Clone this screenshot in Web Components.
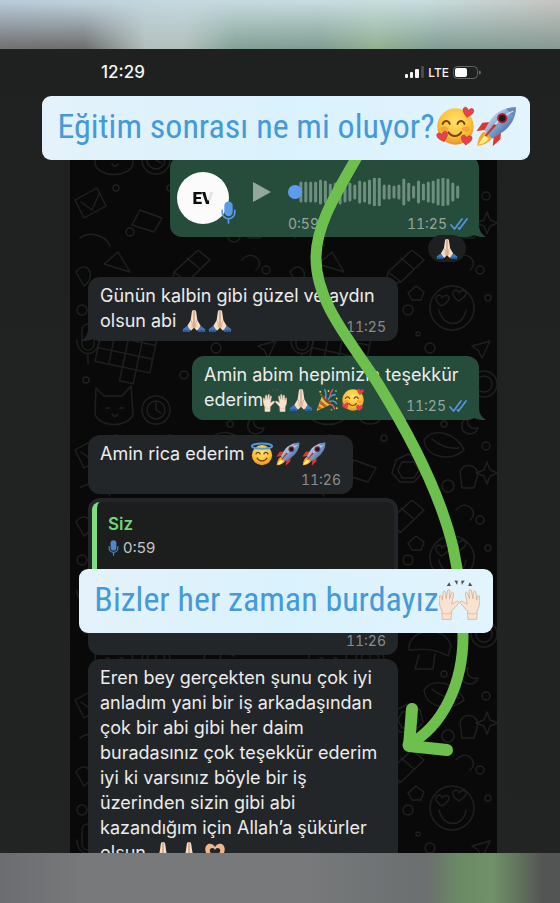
<!DOCTYPE html>
<html lang="tr">
<head>
<meta charset="utf-8">
<meta name="viewport" content="width=device-width, initial-scale=1">
<title>Eğitim sonrası</title>
<style>
  body {
    margin: 0;
    background: #202221;
    font-family: Inter, "Liberation Sans", sans-serif;
  }
</style>
</head>
<body>
<story-page>
  <phone-status slot="phone" time="12:29" network="LTE"></phone-status>
  <chat-wall slot="phone">
    <voice-message length="0:59" time="11:25"></voice-message>
    <chat-reaction><emoji-icon name="pray"></emoji-icon></chat-reaction>
    <chat-bubble class="wide" time="11:25" tail>Günün kalbin gibi güzel ve aydın<br>olsun abi <emoji-icon name="pray"></emoji-icon><emoji-icon name="pray"></emoji-icon></chat-bubble>
    <chat-bubble side="out" time="11:25" tail>Amin abim hepimizin teşekkür<br>ederim<emoji-icon name="hands"></emoji-icon><emoji-icon name="pray"></emoji-icon><emoji-icon name="party"></emoji-icon><emoji-icon name="love"></emoji-icon></chat-bubble>
    <chat-bubble class="short" time="11:26" stacked>Amin rica ederim <emoji-icon name="halo"></emoji-icon><emoji-icon name="rocket"></emoji-icon><emoji-icon name="rocket"></emoji-icon></chat-bubble>
    <chat-quote class="wide" author="Siz" length="0:59" time="11:26"></chat-quote>
    <chat-bubble class="wide">Eren bey gerçekten şunu çok iyi<br>anladım yani bir iş arkadaşından<br>çok bir abi gibi her daim<br>buradasınız çok teşekkür ederim<br>iyi ki varsınız böyle bir iş<br>üzerinden sizin gibi abi<br>kazandığım için Allah’a şükürler<br>olsun <emoji-icon name="pray"></emoji-icon><emoji-icon name="pray"></emoji-icon><emoji-icon name="heart"></emoji-icon></chat-bubble>
  </chat-wall>
  <story-caption slot="caption">Eğitim sonrası ne mi oluyor?<emoji-icon name="love"></emoji-icon><emoji-icon name="rocket"></emoji-icon></story-caption>
  <story-caption slot="caption">Bizler her zaman burdayız<emoji-icon name="hands"></emoji-icon></story-caption>
</story-page>

<script>
const MIC = `
  <svg class="mic" viewBox="0 0 14 22" aria-hidden="true">
    <rect x="3" y="0.5" width="8" height="14" rx="4" fill="currentColor"/>
    <path d="M1 9v2a6 6 0 0 0 12 0V9M7 17v4" fill="none" stroke="currentColor" stroke-width="1.6" stroke-linecap="round"/>
  </svg>`;

const TICKS = `
  <svg class="ticks" viewBox="0 0 18 12" aria-hidden="true">
    <path d="M1 7l3.5 4L12 1M8.500 10l1 1L17 1" fill="none" stroke="#4f94dc" stroke-width="1.8" stroke-linecap="round" stroke-linejoin="round"/>
  </svg>`;

const FACE = `
  <radialGradient id="face" cx=".5" cy=".35" r=".65">
    <stop offset="0" stop-color="#ffe46a"/><stop offset=".65" stop-color="#fbc137"/><stop offset="1" stop-color="#e9922a"/>
  </radialGradient>`;

const HEART = 'M0 2.200C-1-1-4.500-.6-4.200 2.200C-4 4.600-1.500 6 0 7.600C1.500 6 4 4.600 4.200 2.200C4.500-.6 1-1 0 2.200Z';

const EMOJI = {
  pray: `
    <path d="M1 27l5-4 6 3-2 4.500H1.500zM31 27l-5-4-6 3 2 4.500h8.500z" fill="#3f78bf"/>
    <path d="M1.500 30.500l1-3 8 1-1 2zM30.500 30.500l-1-3-8 1 1 2z" fill="#2b5a9c"/>
    <path d="M15.800 1.500c-1.800-.4-2.600 1-2.800 3L11.500 15 7 22.500l5 6.500 3.800-4zM16.200 1.500c1.800-.4 2.600 1 2.800 3L20.500 15l4.500 7.500-5 6.500-3.800-4z" fill="#f8dcc4"/>
    <path d="M16 2v24M12 15.500c2 2 2 6 1.500 9M20 15.500c-2 2-2 6-1.500 9" fill="none" stroke="#c79678" stroke-width=".9"/>`,
  love: `
    <defs>${FACE}</defs>
    <circle cx="16" cy="16" r="14.200" fill="url(#face)"/>
    <path d="M6 14c1-3 4.500-3 5.500 0M17.500 14c1-3 4.500-3 5.500 0M10.500 20.500c2 3.800 8 3.800 10 0" fill="none" stroke="#7a3f16" stroke-width="1.500" stroke-linecap="round"/>
    <ellipse cx="7.500" cy="18" rx="3" ry="2" fill="#f2813c" opacity=".5"/><ellipse cx="24" cy="18" rx="3" ry="2" fill="#f2813c" opacity=".5"/>
    <g fill="#e8414a" stroke="#b92d3a" stroke-width=".4">
      <path transform="translate(26.500 1.500) rotate(12)" d="${HEART}"/>
      <path transform="translate(5 20.500) rotate(-16)" d="${HEART}"/>
      <path transform="translate(25 23) rotate(8)" d="${HEART}"/>
    </g>`,
  halo: `
    <defs>${FACE}</defs>
    <circle cx="16" cy="17.500" r="13.500" fill="url(#face)"/>
    <ellipse cx="16" cy="5.500" rx="13.500" ry="3.500" fill="none" stroke="#4a9be6" stroke-width="2.600"/>
    <path d="M8 16c1-3 4.500-3 5.500 0M18.500 16c1-3 4.500-3 5.500 0M9.500 21.500c3 5 10 5 13 0" fill="none" stroke="#7a3f16" stroke-width="1.700" stroke-linecap="round"/>`,
  rocket: `
    <defs><linearGradient id="hull" x1="0" y1="0" x2="1" y2="1">
      <stop offset=".1" stop-color="#dfe9f3"/><stop offset=".5" stop-color="#7fa3cf"/><stop offset=".9" stop-color="#2f5188"/>
    </linearGradient></defs>
    <path d="M11.500 12.500l-6.500.5-4.500 6.500 8-1zM19.500 20.500l-.5 5.500-6 5.500 1-8.500z" fill="#d8392f"/>
    <path d="M6 20c-3 2-4.500 6-5 11 5-.5 9-2.500 11-5.500l-2-4z" fill="#f6a623"/>
    <path d="M7 23c-2 1.500-3.500 4-5 7 4-.5 6-2 8-4.500z" fill="#fff08a"/>
    <path d="M31 1c-8 0-15 3.500-19.500 9.500L6.500 19l6 6.500 8-5C27 16 31.500 9 31 1z" fill="url(#hull)"/>
    <path d="M31 1c-3 0-5.500.4-7.500 1.200l6 6C30.600 6 31 3.500 31 1z" fill="#6789b7"/>
    <path d="M29 4C20 8 14 14 9.500 21.500" fill="none" stroke="#f4f7fb" stroke-width="1.200" opacity=".7"/>
    <circle cx="20.500" cy="9.500" r="4" fill="#a92832"/><circle cx="20.500" cy="9.500" r="2.500" fill="#24161f"/>
    <path d="M16 15L8 24l-1-1 7-9z" fill="#c8342f"/>`,
  hands: `
    <g id="h">
      <path d="M2.500 31.500l-.2-6.500C.4 21.500-.2 18 .3 14c.2-1.500 1.500-1.400 1.700 0l.6 2.500.6-6c.2-1.600 1.900-1.600 2 0l.3 5 1.200-6.200c.3-1.500 1.900-1.300 1.900.2L8.200 15.500l1.500-4.300c.5-1.400 1.900-1 1.700.5l-1.400 8 3.600-2.200c1.500-.8 2.400.6 1.500 1.700L9.800 25l-.4 6.500z" fill="#f8e2d0" stroke="#d3ad94" stroke-width=".6"/>
      <path d="M2.800 26.500c2 1 4.500 1 6.600 0" fill="none" stroke="#d9b59d" stroke-width=".6"/>
    </g>
    <use href="#h" transform="matrix(-1 0 0 1 32 0)"/>
    <path d="M6 5.500l2-3 1.200 3zM12 1.200l2.700.2-.6 3.200zM20 1.200l-2.700.2.600 3.200zM26 5.500l-2-3-1.200 3z" fill="#4b5257"/>`,
  party: `
    <path d="M2 30.500L9.500 10l12 11.500z" fill="#f1b834"/>
    <path d="M7.200 16.500l9 7.500-3.500 1.700-7-5zM4.500 23.500l5 3.500-3.700 1.600-2.300-1.500z" fill="#b6622c"/>
    <ellipse cx="15.500" cy="15.800" rx="2.800" ry="8.300" transform="rotate(-46 15.500 15.800)" fill="#7d4a2a"/>
    <path d="M14 14c1-5 1-8-1-12M18 15c2-5 5-6 9-6M19 18c4-2 8 0 10 3" fill="none" stroke="#4b9fe0" stroke-width="1.800" stroke-linecap="round"/>
    <path d="M20 11c0-4 1-6 4-9M20 22c3 0 5 2 6 6" fill="none" stroke="#e25564" stroke-width="1.800" stroke-linecap="round"/>
    <g fill="#f4cb3f"><circle cx="7" cy="5" r="1.300"/><circle cx="29" cy="14" r="1.300"/><circle cx="18" cy="4" r="1.200"/><circle cx="29" cy="27" r="1.300"/></g>
    <g fill="#68b85b"><circle cx="28" cy="4" r="1.300"/><circle cx="22" cy="29" r="1.300"/><circle cx="8" cy="9" r="1"/></g>`,
  heart: `
    <path d="M16 8C12 1 3 3 3 11c0 6 4 9 6 12l-1 8h5l2-6 1 1 1-1 2 6h5l-1-8c2-3 6-6 6-12C29 3 20 1 16 8z" fill="#edb68c"/>
    <path d="M16 12c-2-4-7-3-7 1 0 3 4 5 7 9 3-4 7-6 7-9 0-4-5-5-7-1z" fill="#232628"/>`
};

class EmojiIcon extends HTMLElement {
  connectedCallback() {
    const shadow = this.attachShadow({ mode: 'open' });
    shadow.innerHTML = `
      <style>
        :host { display: inline-block; width: var(--emoji, 24px); height: var(--emoji, 24px); margin-right: var(--emoji-gap, 2px); vertical-align: middle; }
        svg { display: block; width: 100%; height: 100%; }
      </style>
      <svg viewBox="0 0 32 32" aria-hidden="true">${EMOJI[this.getAttribute('name')]}</svg>`;
  }
}

class StoryPage extends HTMLElement {
  connectedCallback() {
    const shadow = this.attachShadow({ mode: 'open' });
    shadow.innerHTML = `
      <style>
        :host { display: flex; flex-direction: column; height: 100vh; overflow: hidden; }
        .band { position: relative; flex: none; height: 49px; }
        .top { background: linear-gradient(90deg, #b7c9d7, #c4d8df 30%, #c6dcdd 75%, #c4c4c0); }
        .top::after {
          content: ""; position: absolute; inset: 0;
          background: linear-gradient(90deg, #6f6f70, #6c6c6c 15%, #b2beba 26%, #b2beba 33%, #83a096 42%, #7f9b91 57%, #91af8f 67%, #809c92 78%, #879892);
          -webkit-mask-image: linear-gradient(transparent 5%, #000);
          mask-image: linear-gradient(transparent 5%, #000);
        }
        .bottom {
          height: 50px;
          background: linear-gradient(90deg, #6b6d70, #78797b 15%, #77797b 55%, #6b6f70 76%, #6b8a65 82%, #6f9168 88%, #60705c 93%, #525553 97%);
        }
        .story { position: relative; flex: 1; min-height: 0; overflow: hidden; background: linear-gradient(#1f2020, #222423); }
        .phone { display: flex; flex-direction: column; height: 100%; padding: 0 63px 0 70px; box-sizing: border-box; }
        .arrow { position: absolute; top: 0; left: 0; width: 100%; }
        .captions {
          position: absolute; inset: 0; padding: 47px 0 0 12px;
          display: flex; flex-direction: column; align-items: center; gap: 409px;
        }
      </style>
      <div class="band top"></div>
      <main class="story">
        <div class="phone"><slot name="phone"></slot></div>
        <svg class="arrow" viewBox="0 49 560 804" fill="none" stroke="#6dbf4e" stroke-width="11" stroke-linecap="round" stroke-linejoin="round" aria-hidden="true">
          <path d="M366 140C346 180 316 218 316 258C316 304 353 344 377 382C413 440 441 497 453 547C460 580 463 610 463 636C463 682 444 726 408 745"/>
          <path d="M412 709L409 746L447 750" stroke-width="12"/>
        </svg>
        <div class="captions"><slot name="caption"></slot></div>
      </main>
      <div class="band bottom"></div>`;
  }
}

class StoryCaption extends HTMLElement {
  connectedCallback() {
    const shadow = this.attachShadow({ mode: 'open' });
    shadow.innerHTML = `
      <style>
        :host {
          --emoji: 41px; --emoji-gap: 0px;
          display: block; padding: 0 13px 4px 15px; border-radius: 9px;
          background: linear-gradient(90deg, #e4f2fb, #daf2fd 50%, #e2f4fd);
          color: #4699da;
          font: 34px/60px "Liberation Sans Narrow", "Roboto Condensed", "Open Sans Condensed", "Liberation Sans", sans-serif;
          white-space: nowrap;
        }
        ::slotted(emoji-icon) { margin-top: -6px; }
      </style>
      <slot></slot>`;
  }
}

class PhoneStatus extends HTMLElement {
  connectedCallback() {
    const shadow = this.attachShadow({ mode: 'open' });
    shadow.innerHTML = `
      <style>
        :host { display: flex; align-items: center; gap: 4px; flex: none; height: 46px; padding: 0 16px 60px 31px; color: #f4f4f4; }
        .time { margin-right: auto; font-size: 17px; font-weight: 500; }
        .net { font-size: 12px; font-weight: 500; }
      </style>
      <span class="time">${this.getAttribute('time')}</span>
      <svg width="19" height="12" aria-hidden="true">
        <g fill="#f4f4f4"><rect y="8" width="3" height="4" rx="1"/><rect x="5" y="6" width="3" height="6" rx="1"/><rect x="10" y="3" width="4" height="9" rx="1"/></g>
        <rect x="16" width="3" height="12" rx="1" fill="#4a4a4a"/>
      </svg>
      <span class="net">${this.getAttribute('network')}</span>
      <svg width="28" height="13" aria-hidden="true">
        <rect x=".5" y=".5" width="24" height="12" rx="4" fill="none" stroke="#666"/>
        <rect x="2" y="2" width="12" height="9" rx="2" fill="#fff"/>
        <path d="M26 4.500a2 2 0 0 1 0 4z" fill="#666"/>
      </svg>`;
  }
}

class ChatWall extends HTMLElement {
  connectedCallback() {
    const shadow = this.attachShadow({ mode: 'open' });
    shadow.innerHTML = `
      <style>
        :host { position: relative; display: block; flex: 1; min-height: 0; overflow: hidden; background: #090909; }
        svg { position: absolute; inset: 0; width: 100%; height: 100%; }
        .list { position: relative; display: flex; flex-direction: column; align-items: flex-start; gap: 15px; padding: 1px 18px 0; }
        ::slotted([side="out"]), ::slotted(voice-message), ::slotted(chat-reaction) { align-self: flex-end; }
        ::slotted(chat-quote) { margin-top: -11px; margin-bottom: -11px; }
        ::slotted(.wide) { width: 310px; }
        ::slotted(.short) { width: 265px; }
      </style>
      <svg aria-hidden="true">
        <defs><pattern id="doodles" width="214" height="250" patternUnits="userSpaceOnUse" x="0" y="95">
          <g fill="none" stroke="#1e1f1f" stroke-width="1.400" stroke-linejoin="round" stroke-linecap="round">
            <circle cx="168" cy="58" r="22"/><path d="M155 60c4 18 24 18 27 0M158 56c-7-4-8-10-3-11 2 0 3 2 3 3 2-4 8-3 7 1-1 3-4 5-7 7zM175 51c-7-4-8-10-3-11 2 0 3 2 3 3 2-4 8-3 7 1-1 3-4 5-7 7z"/>
            <path d="M104 22l24-22 12 10-23 22-15 3zM117 8l13 11M104 22l13 10"/>
            <g transform="rotate(12 50 90)"><path d="M30 74h56v42H30zM30 88h56M30 102h56M44 74v42M58 74v56h14V74M58 116v14"/></g>
            <path d="M12 94v-14c0-8 12-8 12 0v14c0 8-12 8-12 0zM7 90c0 18 22 18 22 0M18 104v10"/>
            <path d="M26 138l8 8h18l9-10 2 28c-4 14-34 14-38 0zM36 158h3M50 158h3M42 164c2 3 4 3 6 0"/>
            <circle cx="86" cy="160" r="14"/><circle cx="86" cy="160" r="9"/><path d="M86 153v7l5 3"/>
            <path d="M125 150c-2-22 36-26 42-4l-3 10c-14-8-26-7-39-6zM135 155l-4 14h18l2-15"/>
            <path d="M140 190c10-14 34-6 40 10-14 12-38 8-40-10zM148 189c8 7 18 10 27 9"/>
            <path d="M184 168c-8 2-9 14 1 16 5 0 8-3 9-6-8 2-12-4-10-10z"/>
            <path d="M112 210l12-6 12 6 3 12-9 10h-14l-8-9zM118 212h12l5 8-5 8h-12l-4-8z"/>
            <path d="M60 22l-26-8 14-12zM70 210l22 8-8 14-22-7zM5 200l22-12 9 18-22 12zM11 202l11 8 7-16"/>
            <path d="M188 96l18-5-8 17-4-8zM90 60l3-8 3 8 8 3-8 3-3 8-3-8-8-3zM200 220l3-8 3 8 8 3-8 3-3 8-3-8-8-3z"/>
            <circle cx="200" cy="134" r="13"/><circle cx="200" cy="134" r="8"/><circle cx="146" cy="98" r="5"/><circle cx="60" cy="232" r="4"/>
            <circle cx="196" cy="20" r="4"/><circle cx="114" cy="125" r="4"/><circle cx="180" cy="112" r="3"/><circle cx="100" cy="188" r="3"/>
            <circle cx="124" cy="60" r="5"/><circle cx="12" cy="60" r="5"/><circle cx="80" cy="36" r="4"/><circle cx="164" cy="236" r="6"/><circle cx="46" cy="188" r="3"/>
            <circle cx="134" cy="84" r="2"/><circle cx="204" cy="48" r="3"/><circle cx="160" cy="174" r="3"/><circle cx="202" cy="196" r="4"/><circle cx="16" cy="130" r="3"/>
            <path d="M142 120c8-12 24-4 18 6s-22 8-18-6zM172 10c10-12 24 2 14 10M6 22c10-14 22 4 8 14zM10 238c10-8 26-2 30 8"/>
            <path d="M176 222c4-10 16-8 18 2l-4 14h-12zM132 36l8 6-3 8h-9l-4-7zM36 52c4-8 16-6 16 2s-14 8-16-2z"/>
          </g>
        </pattern></defs>
        <rect width="100%" height="100%" fill="url(#doodles)"/>
      </svg>
      <div class="list"><slot></slot></div>`;
  }
}

const BUBBLE_STYLE = `
  :host {
    --fill: #232628;
    position: relative; display: block; box-sizing: border-box;
    border-radius: 12px; background: var(--fill); color: #ececec;
    font-size: 18px; line-height: 25px; white-space: nowrap;
  }
  .meta { display: flex; align-items: center; gap: 3px; font-size: 14px; line-height: 16px; font-variant-numeric: tabular-nums; color: #898c8e; }
  .ticks { width: 18px; height: 12px; }
  .tail { position: absolute; bottom: 0; left: -7px; width: 20px; height: 16px; }
  .tail.out { left: auto; right: -7px; transform: scaleX(-1); }
`;

const tail = (side) => `
  <svg class="tail ${side}" viewBox="0 0 20 16" aria-hidden="true"><path d="M7 2c0 6-1 10-7 14 5 .3 9-.5 12-2l8 2V2z" fill="var(--fill)"/></svg>`;

class ChatBubble extends HTMLElement {
  connectedCallback() {
    const out = this.getAttribute('side') === 'out';
    const time = this.getAttribute('time');
    const shadow = this.attachShadow({ mode: 'open' });
    shadow.innerHTML = `
      <style>
        ${BUBBLE_STYLE}
        :host { padding: 6px 12px; }
        :host([side="out"]) { --fill: #264c3b; width: 287px; }
        :host([side="out"]) .meta { color: #93a89d; }
        .body { position: relative; display: grid; }
        .text, .meta { grid-area: 1 / 1; }
        .text { padding-bottom: 2px; }
        .meta { align-self: end; justify-self: end; }
        :host([stacked]) .meta { grid-area: 2 / 1; padding-top: 4px; }
        ::slotted(emoji-icon) { margin-top: -4px; margin-bottom: -2px; }
      </style>
      ${this.hasAttribute('tail') ? tail(out ? 'out' : 'in') : ''}
      <div class="body">
        <div class="text"><slot></slot></div>
        ${time ? `<div class="meta"><time>${time}</time>${out ? TICKS : ''}</div>` : ''}
      </div>`;
  }
}

class ChatQuote extends HTMLElement {
  connectedCallback() {
    const shadow = this.attachShadow({ mode: 'open' });
    shadow.innerHTML = `
      <style>
        ${BUBBLE_STYLE}
        :host { height: 157px; padding: 4px 4px 6px; display: flex; flex-direction: column; justify-content: space-between; }
        .quote { border-left: 5px solid #7fdc82; border-radius: 8px; background: #1c1e1e; padding: 10px 11px 18px; }
        .author { color: #71d67a; font-size: 17px; font-weight: 600; line-height: 24px; }
        .clip { display: flex; align-items: center; gap: 4px; color: #c4c6c6; font-size: 15px; line-height: 24px; }
        .mic { width: 11px; height: 16px; color: #4f86c6; }
        .meta { justify-content: flex-end; padding-right: 8px; }
      </style>
      <div class="quote">
        <div class="author">${this.getAttribute('author')}</div>
        <div class="clip">${MIC}<span>${this.getAttribute('length')}</span></div>
      </div>
      <div class="meta"><time>${this.getAttribute('time')}</time></div>`;
  }
}

class VoiceMessage extends HTMLElement {
  connectedCallback() {
    const heights = [10, 18, 18, 18, 18, 22, 20, 14, 16, 22, 18, 16, 12, 20, 18, 22, 26, 26, 12, 12, 10, 12, 24, 16, 10, 20, 14, 18, 20, 24, 27, 24, 16, 10];
    const bars = heights.map((h, i) => `<path d="M${8 + i * 4.9} ${14 - h / 2}v${h}"/>`).join('');
    const shadow = this.attachShadow({ mode: 'open' });
    shadow.innerHTML = `
      <style>
        ${BUBBLE_STYLE}
        :host { --fill: #264c3b; width: 309px; padding: 12px 11px 5px 7px; }
        .player { position: relative; display: grid; grid-template: 48px 16px / 52px 18px 1fr; column-gap: 24px; align-items: center; }
        .avatar { position: relative; grid-row: 1 / 3; width: 52px; height: 52px; margin-bottom: 4px; border-radius: 50%; background: #fbfbfb; display: grid; place-items: center; }
        .logo { font: 900 17px/20px Roboto, sans-serif; color: transparent; background: linear-gradient(75deg, #0b0b0b 68%, #e3e3e3 70%); background-clip: text; -webkit-background-clip: text; }
        .mic { position: absolute; right: -7px; bottom: 0; width: 15px; height: 23px; color: #5c9ae8; }
        button { padding: 0; border: 0; background: none; height: 20px; }
        .wave { display: grid; align-items: center; margin-left: -7px; }
        .wave > * { grid-area: 1 / 1; }
        .wave svg { width: 180px; height: 28px; }
        input { appearance: none; -webkit-appearance: none; width: 172px; height: 14px; margin: 0; background: none; }
        input::-webkit-slider-thumb { -webkit-appearance: none; width: 14px; height: 14px; border-radius: 50%; background: #5d9bf0; }
        .meta { grid-column: 3; margin-left: -7px; color: #93a89d; }
        .sent { margin-left: auto; }
      </style>
      ${tail('out')}
      <div class="player">
        <div class="avatar"><span class="logo">EV</span>${MIC}</div>
        <button type="button" aria-label="Oynat"><svg width="18" height="20"><path d="M0 0l18 10L0 20z" fill="#91a99d"/></svg></button>
        <div class="wave">
          <svg viewBox="0 0 180 28" stroke="#6d8f7f" stroke-width="3" stroke-linecap="round" aria-hidden="true">${bars}</svg>
          <input type="range" min="0" max="59" value="0" aria-label="Konum">
        </div>
        <div class="meta"><span>${this.getAttribute('length')}</span><time class="sent">${this.getAttribute('time')}</time>${TICKS}</div>
      </div>`;
  }
}

class ChatReaction extends HTMLElement {
  connectedCallback() {
    const shadow = this.attachShadow({ mode: 'open' });
    shadow.innerHTML = `
      <style>
        :host { --emoji: 22px; --emoji-gap: 0px; display: grid; place-items: center; width: 38px; height: 27px; margin: -17px 13px 0 0; border-radius: 14px; background: #1d1f20; position: relative; }
      </style>
      <slot></slot>`;
  }
}

customElements.define('emoji-icon', EmojiIcon);
customElements.define('story-page', StoryPage);
customElements.define('story-caption', StoryCaption);
customElements.define('phone-status', PhoneStatus);
customElements.define('chat-wall', ChatWall);
customElements.define('chat-bubble', ChatBubble);
customElements.define('chat-quote', ChatQuote);
customElements.define('voice-message', VoiceMessage);
customElements.define('chat-reaction', ChatReaction);
</script>
</body>
</html>
